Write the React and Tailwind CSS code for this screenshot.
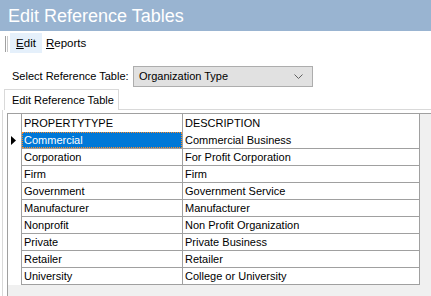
import React from 'react';

const rows = [
    ['Commercial', 'Commercial Business'],
    ['Corporation', 'For Profit Corporation'],
    ['Firm', 'Firm'],
    ['Government', 'Government Service'],
    ['Manufacturer', 'Manufacturer'],
    ['Nonprofit', 'Non Profit Organization'],
    ['Private', 'Private Business'],
    ['Retailer', 'Retailer'],
    ['University', 'College or University'],
];

const Chevron = () => (
    <svg width="9" height="5" viewBox="0 0 9 5" className="block">
        <path d="M0.5 0.5 L4.5 4.5 L8.5 0.5" fill="none" stroke="#606060" strokeWidth="1" />
    </svg>
);

const Arrow = () => (
    <svg width="5" height="9" viewBox="0 0 5 9" className="block">
        <path d="M0 0 L5 4.5 L0 9 Z" fill="#000" />
    </svg>
);

const App = () => {
    return (
        <div className="w-[431px] h-[296px] overflow-hidden bg-white text-black font-['Liberation_Sans',Arial,sans-serif] text-[11px] leading-none">
            {/* title */}
            <div className="h-[31px] bg-[#99b4d1] text-white text-[18px] pl-[8px] flex items-center">
                Edit Reference Tables
            </div>

            {/* menu */}
            <div className="h-[26px] pt-[2px] flex items-start">
                <div className="flex gap-[1px] ml-[5px] mt-[3px] h-[16px]">
                    <div className="w-[1px] h-full bg-[#a0a0a0]" />
                    <div className="w-[1px] h-full bg-[#c8c8c8]" />
                </div>
                <div className="ml-[2px] h-[20px] w-[32px] bg-[#e5f0fb] flex items-center justify-center text-[11.5px] pt-[2px]">
                    <span><span className="underline">E</span>dit</span>
                </div>
                <div className="h-[20px] px-[4px] flex items-center text-[11.5px] pt-[2px]">
                    <span><span className="underline">R</span>eports</span>
                </div>
            </div>

            {/* select */}
            <div className="mt-[9px] flex items-center h-[21px]">
                <span className="ml-[12px] w-[121px]">Select Reference Table:</span>
                <div className="w-[180px] h-[21px] bg-[#e1e1e1] border border-[#adadad] flex items-center justify-between pl-[5px] pr-[9px]">
                    <span>Organization Type</span>
                    <Chevron />
                </div>
            </div>

            {/* tab strip */}
            <div className="mt-[2px] flex items-end h-[21px]">
                <div className="ml-[4px] w-[115px] h-[21px] border border-b-0 border-[#d9d9d9] bg-white flex items-center pl-[7px]">
                    Edit Reference Table
                </div>
                <div className="flex-1 border-b border-[#d9d9d9]" />
            </div>

            {/* tab page */}
            <div className="ml-[2px] border-l border-[#d9d9d9] pl-[4px] pt-[3px] h-[200px]">
                <div className="border-l border-t border-[#a0a0a0] bg-[#f0f0f0] h-full">
                    <div className="flex h-[18px] w-[412px] bg-white">
                        <div className="w-[14px] border-r border-[#a0a0a0]" />
                        <div className="w-[161px] border-r border-[#a0a0a0] flex items-center pl-[2px]">PROPERTYTYPE</div>
                        <div className="flex-1 border-r border-[#a0a0a0] flex items-center pl-[2px]">DESCRIPTION</div>
                    </div>
                    {rows.map(([type, desc], i) => (
                        <div key={type} className="flex h-[17px] w-[412px] bg-white">
                            <div className="w-[14px] border-r border-[#a0a0a0] flex items-center pl-[3px]">
                                {i === 0 && <Arrow />}
                            </div>
                            <div className="w-[161px] border-r border-b border-[#a0a0a0]">
                                {i === 0 ? (
                                    <div className="h-full bg-[#0078d7] text-white border border-dotted border-[#ff8c28] flex items-center pl-[1px]">
                                        {type}
                                    </div>
                                ) : (
                                    <div className="h-full flex items-center pl-[2px]">{type}</div>
                                )}
                            </div>
                            <div className="flex-1 border-r border-b border-[#a0a0a0] flex items-center pl-[2px]">
                                {desc}
                            </div>
                        </div>
                    ))}
                </div>
            </div>
        </div>
    );
};

export default App;
